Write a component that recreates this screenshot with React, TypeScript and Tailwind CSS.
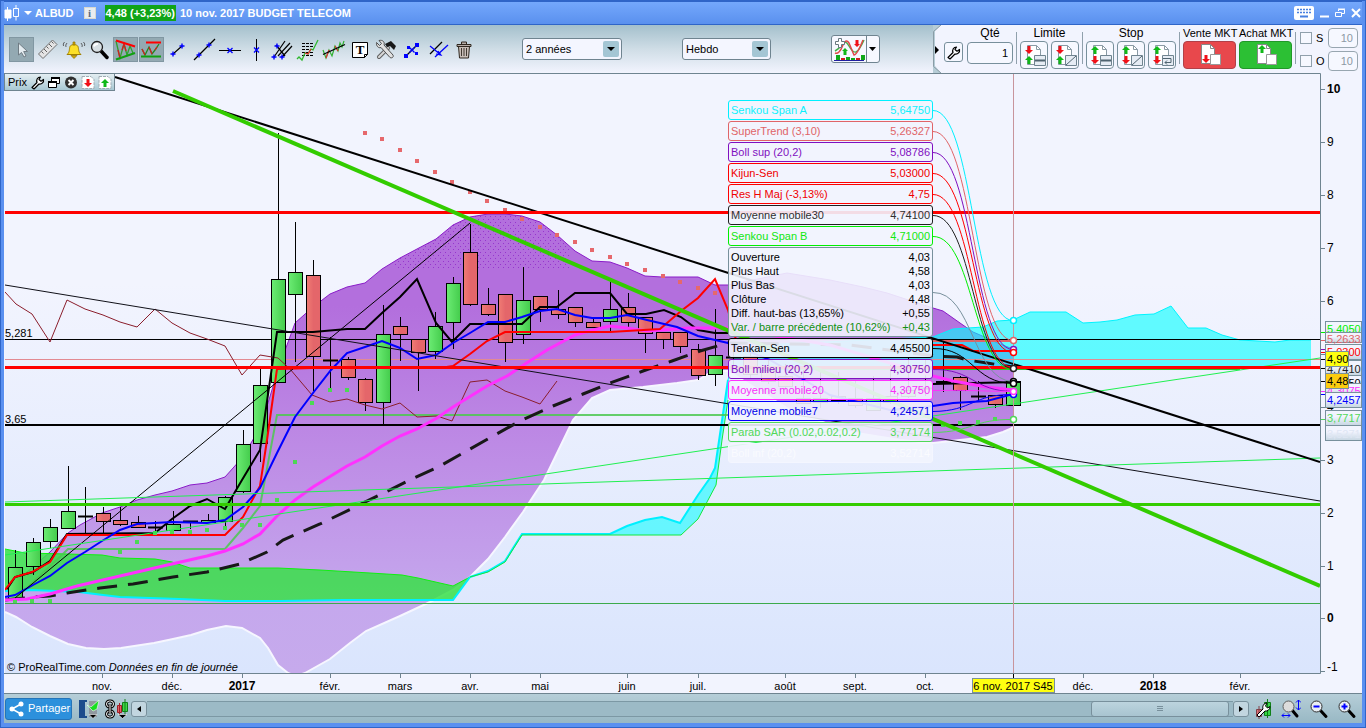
import { ReactNode } from "react";

type Candle = [number, number, number, number, number, "g" | "r" | "d"];

// index, high, low, body top, body bottom, kind
const candles: Candle[] = [
  [0, 550, 598, 567, 598, "g"],
  [1, 538, 575, 542, 566, "g"],
  [2, 519, 548, 527, 541, "g"],
  [3, 466, 528, 511, 528, "g"],
  [4, 487, 533, 516, 516, "d"],
  [5, 507, 533, 513, 521, "r"],
  [6, 507, 526, 520, 524, "r"],
  [7, 516, 527, 522, 527, "r"],
  [8, 521, 533, 527, 527, "d"],
  [9, 511, 532, 524, 530, "g"],
  [10, 521, 529, 521, 521, "d"],
  [11, 514, 522, 520, 522, "g"],
  [12, 496, 526, 497, 521, "g"],
  [13, 430, 493, 444, 491, "g"],
  [14, 369, 462, 385, 443, "g"],
  [15, 133, 382, 279, 382, "g"],
  [16, 222, 362, 272, 294, "g"],
  [17, 260, 391, 275, 356, "r"],
  [18, 337, 388, 360, 360, "d"],
  [19, 357, 380, 359, 377, "r"],
  [20, 378, 411, 379, 402, "r"],
  [21, 305, 424, 334, 402, "g"],
  [22, 317, 361, 326, 334, "r"],
  [23, 339, 391, 339, 352, "r"],
  [24, 312, 359, 326, 351, "g"],
  [25, 277, 349, 283, 322, "g"],
  [26, 224, 306, 252, 304, "r"],
  [27, 288, 316, 304, 314, "r"],
  [28, 294, 362, 294, 342, "r"],
  [29, 267, 344, 300, 334, "g"],
  [30, 296, 322, 296, 309, "r"],
  [31, 290, 319, 309, 314, "r"],
  [32, 307, 327, 307, 322, "r"],
  [33, 318, 327, 322, 327, "r"],
  [34, 282, 332, 309, 321, "g"],
  [35, 293, 327, 307, 322, "r"],
  [36, 317, 353, 317, 333, "r"],
  [37, 332, 349, 332, 339, "r"],
  [38, 332, 353, 332, 346, "r"],
  [39, 344, 380, 349, 375, "r"],
  [40, 309, 386, 355, 374, "g"],
  [41, 350, 366, 357, 357, "d"],
  [42, 352, 378, 356, 374, "r"],
  [43, 360, 384, 370, 381, "r"],
  [44, 364, 390, 376, 386, "r"],
  [45, 370, 404, 398, 403, "r"],
  [46, 368, 408, 398, 402, "g"],
  [47, 372, 404, 396, 400, "r"],
  [48, 380, 408, 398, 405, "r"],
  [49, 376, 410, 398, 410, "g"],
  [50, 362, 404, 396, 402, "r"],
  [51, 358, 398, 390, 396, "g"],
  [52, 360, 396, 388, 388, "d"],
  [53, 341, 392, 381, 382, "g"],
  [54, 376, 410, 377, 390, "r"],
  [55, 381, 401, 396, 396, "d"],
  [56, 395, 408, 395, 404, "r"],
  [57, 380, 405, 381, 405, "g"],
];

const bandUpper =
  "5,590 15,582 33,567 50,552 68,533 80,525 102,513 120,507 137,500 155,495 172,491 190,485 207,483 225,477 242,458 260,428 268,403 278,370 287,345 295,323 313,307 330,294 347,287 365,283 382,269 400,258 417,249 436,239 453,225 470,217 488,214 505,214 522,216 540,222 557,235 575,251 592,261 610,262 627,268 645,276 662,277 698,277 715,285 728,285 787,273 830,280 863,287 887,293 933,308 943,311 960,323 973,332 987,338 1000,344 1013,349";
const bandLower =
  "5,612 16,617 32,627 50,636 68,644 86,648 104,649 121,648 154,643 173,639 191,635 207,630 226,626 242,628 260,638 268,648 278,665 288,673 296,676 305,673 330,659 350,643 366,631 400,616 430,602 453,590 470,577 488,559 505,537 523,512 544,480 560,447 573,420 592,398 610,390 643,387 677,383 698,380 710,373 717,371 728,371 790,410 850,432 900,440 933,443 960,440 987,437 1003,432 1010,429 1013,427";
const bandFill = bandUpper + " " + bandLower.split(" ").reverse().join(" ");

const oldCloudTop =
  "5,549 25,553 67,554 102,555 120,558 155,559 172,562 190,568 278,568 320,570 370,573 402,575 418,578 453,586 470,577";
const oldCloudBottom =
  "5,591 32,590 79,592 103,595 120,597 179,599 225,601 280,601 343,600 453,600 470,577";
const oldCloudFill = oldCloudTop + " " + oldCloudBottom.split(" ").reverse().join(" ");

const spanAMid = "470,577 488,571 505,561 522,534 610,534 627,526 645,520 662,517 680,523 698,495 710,478 715,468 728,380";
const spanBMid = "470,577 488,572 505,562 522,535 681,535 698,519 716,485 722,440 728,400";
const cloudMidFill =
  "522,534 610,534 627,526 645,520 662,517 680,523 698,495 710,478 715,468 728,380 728,400 722,440 716,485 698,519 681,535 522,535";
const spanANew =
  "728,380 734,356 760,345 933,337 953,329 983,327 997,321 1013,320 1030,312 1066,312 1083,323 1100,322 1117,320 1135,315 1154,314 1171,306 1188,328 1206,328 1222,335 1240,340 1275,342 1290,340 1311,340";

const chikou =
  "5,292 16,304 32,314 50,342 67,300 85,309 103,315 120,322 137,327 155,309 172,323 190,333 207,339 225,346 242,375 260,355 278,358 290,369 312,395 330,402 347,399 365,405 382,409 400,403 417,417 437,416 452,421 470,382 487,380 505,391 522,397 540,404 557,381";
const tenkan =
  "7,589 15,577 33,572 50,561 67,534 155,533 172,519 190,506 207,499 225,509 242,480 260,450 277,332 313,332 347,329 365,329 382,313 400,297 417,279 436,323 452,342 470,324 522,324 540,307 557,307 575,293 610,293 627,314 646,314 664,310 681,317 698,330 715,333 728,333";
const kijun =
  "5,590 15,577 32,572 50,562 67,535 225,535 243,517 260,486 267,440 277,369 313,368 440,368 453,366 470,354 487,341 505,332 610,332 660,329 681,311 698,298 715,279 728,310 736,340";
const mm7 =
  "5,597 15,595 33,585 50,576 67,563 85,552 102,541 120,530 137,524 172,522 207,523 225,520 243,507 260,488 277,453 295,417 313,393 331,370 347,353 365,347 382,341 400,348 417,359 436,355 453,343 470,333 488,322 505,322 522,317 540,311 557,309 575,315 592,318 610,318 627,315 647,320 677,327 698,336 728,343 770,360 830,395 890,410 933,406 953,403 987,401 1013,394";
const mm20 =
  "5,600 27,599 50,594 77,586 120,576 163,566 207,556 225,551 243,544 260,534 277,516 295,500 313,487 347,466 365,457 382,446 400,436 417,429 437,418 453,407 487,386 507,376 522,366 547,350 575,335 593,330 610,326 627,328 647,331 662,330 688,328 728,328 830,345 933,376 953,381 987,387 1013,390";
const mm30 =
  "5,600 33,597 50,596 67,593 100,588 133,584 173,577 207,572 240,564 267,552 283,540 320,524 353,508 410,480 440,466 493,436 520,421 553,406 583,394 610,383 643,371 672,361 700,351 728,343 850,345 935,356 957,357 967,360 987,363 1013,367";

const sarRed = [
  [365, 133], [382, 139], [400, 150], [417, 161], [435, 172], [452, 182], [470, 192], [487, 201], [505, 210], [522, 219],
  [540, 227], [557, 235], [575, 242], [592, 250], [610, 257], [627, 264], [645, 270], [663, 276], [680, 282], [698, 288], [715, 293],
];
const sarGreen = [
  [15, 602], [32, 601], [50, 601], [120, 552], [137, 542], [155, 533], [172, 532], [190, 532], [207, 530], [225, 528],
  [242, 525], [260, 525], [277, 500], [295, 462], [312, 403], [330, 390], [347, 390], [943, 425], [960, 423], [978, 422], [995, 419],
];

const links: [number, number, string][] = [
  [110, 320, "#00f0ff"],
  [131, 340, "#e06468"],
  [152, 349, "#8010c0"],
  [173, 352, "#ff0000"],
  [194, 367, "#ff0000"],
  [215, 368, "#202020"],
  [236, 369, "#00f000"],
  [292, 381, "#78909c"],
  [348, 383, "#000000"],
  [369, 391, "#8010c0"],
  [390, 391, "#ff30ff"],
  [411, 394, "#0000ff"],
  [432, 419, "#50d858"],
];

const knobs: [number, string][] = [
  [320, "#00f0ff"],
  [340, "#e06468"],
  [349, "#8010c0"],
  [352, "#ff0000"],
  [368, "#202020"],
  [381, "#000000"],
  [383, "#000000"],
  [394, "#0000ff"],
  [391, "#ff30ff"],
  [419, "#50d858"],
];

const prices: [string, number][] = [
  ["10", 89], ["9", 142], ["8", 195], ["7", 248], ["6", 301], ["5", 354], ["4", 407], ["3", 460], ["2", 513], ["1", 566], ["0", 618], ["-1", 671],
];

const months: [string, number][] = [
  ["nov.", 102], ["déc.", 172], ["2017", 242], ["févr.", 330], ["mars", 400], ["avr.", 470], ["mai", 540], ["juin", 627],
  ["juil.", 698], ["août", 785], ["sept.", 855], ["oct.", 925], ["déc.", 1083], ["2018", 1153], ["févr.", 1240],
];

// value, top, height, baseline, colour
const tags: [string, number, number, number, string][] = [
  ["5,4050", 321, 15, 333, "#00f000"],
  ["5,2633", 332, 10, 343, "#e06468"],
  ["5,0300", 344, 15, 356, "#ff0000"],
  ["4,7410", 360, 15, 373, "#202020"],
  ["4,4550", 375, 15, 387, "#000000"],
  ["4,3075", 383, 11, 395, "#ff30ff"],
  ["4,2457", 392, 15, 404, "#0000ff"],
  ["3,7717", 410, 15, 422, "#50d858"],
  ["3,5271", 425, 15, 438, "#dfe6f4"],
];

const priceTicks: [number, string][] = [
  [332, "#00f000"], [340, "#e06468"], [349, "#8010c0"], [352, "#ff0000"], [359, "#000000"], [368, "#000000"],
  [381, "#000000"], [391, "#ff30ff"], [394, "#0000ff"], [419, "#50d858"],
];

const Chart = () => (
  <svg viewBox="4 73 1358 620" className="block w-full h-auto bg-[#f2f4fe] [font-family:'Liberation_Sans',Arial,sans-serif] text-[11px]">
    <defs>
      <linearGradient id="sky" x1="0" y1="73" x2="0" y2="673" gradientUnits="userSpaceOnUse">
        <stop offset="0.35" stopColor="#f2f4fe" />
        <stop offset="1" stopColor="#dae5fd" />
      </linearGradient>
      <linearGradient id="band" x1="0" y1="214" x2="0" y2="673" gradientUnits="userSpaceOnUse">
        <stop offset="0.2" stopColor="#b36fdd" />
        <stop offset="0.5" stopColor="#bd8ae5" />
        <stop offset="0.85" stopColor="#c5a8ed" />
        <stop offset="1" stopColor="#c6aaec" />
      </linearGradient>
      <linearGradient id="up">
        <stop offset="0" stopColor="#6cec74" />
        <stop offset="1" stopColor="#44cc4c" />
      </linearGradient>
      <linearGradient id="down">
        <stop offset="0" stopColor="#f07c74" />
        <stop offset="0.5" stopColor="#e4666a" />
      </linearGradient>
      <linearGradient id="tag" x1="0" y1="0" x2="0" y2="1">
        <stop offset="0.4" stopColor="#f2f4fe" />
        <stop offset="1" stopColor="#c6d6e2" />
      </linearGradient>
      <pattern id="dots" width="5" height="6" patternUnits="userSpaceOnUse">
        <rect x="0" y="0" width="1" height="1" fill="#8a1cc8" />
        <rect x="3" y="3" width="1" height="1" fill="#8a1cc8" />
      </pattern>
      <clipPath id="plot">
        <rect x="5" y="74" width="1315" height="599" />
      </clipPath>
      <clipPath id="bandTop">
        <rect x="395" y="210" width="175" height="58" />
      </clipPath>
    </defs>

    <rect x="5" y="74" width="1315" height="599" fill="url(#sky)" />

    <g clipPath="url(#plot)" fill="none">
      {/* Bollinger band */}
      <polygon points={bandFill} fill="url(#band)" />
      <polygon points={bandFill} fill="url(#dots)" fillOpacity="0.7" clipPath="url(#bandTop)" />
      <polyline points={bandUpper} stroke="#8a1cc8" />
      <polyline points={bandLower} stroke="#f6f6ff" strokeWidth="2" />

      {/* Ichimoku cloud */}
      <polygon points={oldCloudFill} fill="#38e048" fillOpacity="0.85" />
      <polyline points={oldCloudTop} stroke="#10f010" />
      <polyline points={oldCloudBottom} stroke="#00f0ff" strokeWidth="2" />
      <polygon points={cloudMidFill} fill="#00ffff" fillOpacity="0.55" />
      <polyline points={spanAMid} stroke="#00f0ff" strokeWidth="2" />
      <polyline points={spanBMid} stroke="#14e83c" strokeWidth="1" />
      <polygon points={spanANew + " 1311,369 728,369"} fill="#00ffff" fillOpacity="0.6" />
      <polyline points={spanANew} stroke="#00f4ff" />
      <path d="M728 369.5H1240" stroke="#28c828" />

      {/* SuperTrend */}
      <path d="M15 599L64 553L68 549H225L243 528L260 506L277 415H728" stroke="#4cc850" strokeWidth="2" strokeOpacity="0.85" />
      <path d="M933 340.5H1013" stroke="#e06468" strokeWidth="3" />

      {/* horizontal levels below the candles */}
      <path d="M5 359.5H1320" stroke="#e28a92" />
      <path d="M5 339.5H1320" stroke="#000" />
      <path d="M5 425H1320" stroke="#000" strokeWidth="2" />

      {candles.map(([i, high, low, top, bottom, kind]) => {
        const x = Math.round(15 + i * 17.5) + 0.5;
        return (
          <g key={i} stroke="#000">
            <path d={`M${x} ${high}V${low}`} />
            {kind === "d" ? (
              <path d={`M${x - 7.5} ${top + 0.5}h15`} strokeWidth="2" />
            ) : (
              <rect x={x - 7} y={top + 0.5} width="14" height={bottom - top} fill={kind === "g" ? "url(#up)" : "url(#down)"} />
            )}
          </g>
        );
      })}

      <polyline points={chikou} stroke="#8b1e2c" />
      <polyline points={mm30} stroke="#181818" strokeWidth="3" strokeDasharray="20 11" />
      <polyline points={tenkan} stroke="#000" strokeWidth="2" />
      <path d="M933 384L1020 382" stroke="#000" strokeWidth="2" />
      <polyline points={mm20} stroke="#ff30ff" strokeWidth="3" />
      <polyline points={kijun} stroke="#ff0000" strokeWidth="2" />
      <path d="M933 345H962L973 351H1013" stroke="#ff0000" strokeWidth="2" />
      <polyline points={mm7} stroke="#0000ff" strokeWidth="2" />

      {sarRed.map(([x, y]) => (
        <rect key={x} x={x - 2} y={y - 2} width="4" height="4" fill="#e6686c" />
      ))}
      {sarGreen.map(([x, y]) => (
        <rect key={x} x={x - 2} y={y - 2} width="4" height="4" fill="#4cd854" />
      ))}

      {/* hand drawn lines */}
      <path d="M5 285L1320 501" stroke="#101018" />
      <path d="M15 598L470 223" stroke="#000" />
      <path d="M5 502L1320 458" stroke="#20f050" />
      <path d="M5 555L1320 358" stroke="#20f050" />
      <path d="M115 77L1320 462" stroke="#000" strokeWidth="2" />
      <path d="M5 212.5H1320M5 367.5H1320" stroke="#ff0000" strokeWidth="3" />
      <path d="M5 504.5H1320" stroke="#33cc00" strokeWidth="3" />
      <path d="M5 603.5H1320" stroke="#3caa4a" />
      <path d="M173 91L1320 586" stroke="#33cc00" strokeWidth="4" />
      <path d="M1013.5 73V673" stroke="#c8949c" />

      {links.map(([from, to, color]) => (
        <path key={from} d={`M933 ${from + 0.5}C973 ${from} 973 ${to} 1013 ${to + 0.5}`} stroke={color} />
      ))}
      {knobs.map(([y, color]) => (
        <circle key={y} cx="1013.5" cy={y + 0.5} r="3" fill="#fff" stroke={color} strokeWidth="1.5" />
      ))}
    </g>

    <text x="5" y="337">5,281</text>
    <text x="5" y="423">3,65</text>
    <text x="7" y="671">
      © ProRealTime.com <tspan fontStyle="italic">Données en fin de journée</tspan>
    </text>

    {/* frame and price axis */}
    <path d="M4 73.5H1320.5V673.5H4" fill="none" stroke="#6f8490" />
    {prices.map(([label, y]) => (
      <g key={label}>
        <path d={`M1321 ${y + 0.5}h4`} stroke="#6f8490" />
        <text x="1327" y={label === "-1" ? 671 : y + 4} className={label === "10" || label === "0" ? "font-bold text-[12px]" : "text-[12px]"}>
          {label}
        </text>
      </g>
    ))}
    {priceTicks.map(([y, color]) => (
      <path key={y} d={`M1321 ${y + 0.5}h4`} stroke={color} />
    ))}
    {tags.map(([value, top, height, base, color]) => (
      <g key={value}>
        <rect x="1325.5" y={top + 0.5} width="36" height={height} fill="url(#tag)" stroke="#78909c" />
        <text x="1327" y={base} fill={color}>{value}</text>
      </g>
    ))}
    <rect x="1325.5" y="351.5" width="23" height="15" fill="#ffff10" stroke="#78909c" />
    <text x="1327" y="363">4,90</text>
    <rect x="1325.5" y="373.5" width="23" height="15" fill="#fccc10" stroke="#78909c" />
    <text x="1327" y="385">4,48</text>

    {/* time axis */}
    {months.map(([label, x]) => (
      <g key={x}>
        <path d={`M${x + 0.5} 674v4`} stroke="#6f8490" />
        <text x={x} y="690" textAnchor="middle" className={label.startsWith("20") ? "font-bold text-[12px]" : ""}>
          {label}
        </text>
      </g>
    ))}
    <path d="M1013.5 674v4" stroke="#000" />
    <rect x="972.5" y="678.5" width="82" height="14" fill="#ffff10" stroke="#78909c" />
    <text x="1013" y="690" textAnchor="middle">6 nov. 2017 S45</text>
  </svg>
);

const Reading = ({ name, value, className }: { name: string; value: string; className: string }) => (
  <div className={`flex h-5 items-center justify-between rounded-[3px] border bg-[#f2f4fe]/90 px-[2px] ${className}`}>
    <span>{name}</span>
    <span>{value}</span>
  </div>
);

const bar = [
  ["Ouverture", "4,03"],
  ["Plus Haut", "4,58"],
  ["Plus Bas", "4,03"],
  ["Clôture", "4,48"],
  ["Diff. haut-bas (13,65%)", "+0,55"],
];

const Readings = () => (
  <div className="absolute left-[724px] top-[27px] flex w-[205px] flex-col gap-px text-[11px] leading-[14px]">
    <Reading name="Senkou Span A" value="5,64750" className="border-[#00f0ff] text-[#10f0fc]" />
    <Reading name="SuperTrend (3,10)" value="5,26327" className="border-[#e06468] text-[#e06468]" />
    <Reading name="Boll sup (20,2)" value="5,08786" className="border-[#8010c0] text-[#8010c0]" />
    <Reading name="Kijun-Sen" value="5,03000" className="border-[#ff0000] text-[#f00000]" />
    <Reading name="Res H Maj (-3,13%)" value="4,75" className="border-[#ff0000] text-[#f00000]" />
    <Reading name="Moyenne mobile30" value="4,74100" className="border-[#202020] text-[#303030]" />
    <Reading name="Senkou Span B" value="4,71000" className="border-[#00f000] text-[#10e810]" />
    <div className="h-[90px] rounded-[3px] border border-[#78909c] bg-[#f2f4fe]/90 px-[2px] pt-[2px]">
      {bar.map(([name, value]) => (
        <div key={name} className="flex justify-between">
          <span>{name}</span>
          <span>{value}</span>
        </div>
      ))}
      <div className="flex justify-between text-[#109010]">
        <span>Var. / barre précédente (10,62%)</span>
        <span>+0,43</span>
      </div>
    </div>
    <Reading name="Tenkan-Sen" value="4,45500" className="border-black text-black" />
    <Reading name="Boll milieu (20,2)" value="4,30750" className="border-[#8010c0] text-[#8010c0]" />
    <Reading name="Moyenne mobile20" value="4,30750" className="border-[#ff30ff] text-[#f830f8]" />
    <Reading name="Moyenne mobile7" value="4,24571" className="border-[#0000ff] text-[#0000e8]" />
    <Reading name="Parab SAR (0.02,0.02,0.2)" value="3,77174" className="border-[#50d858] text-[#50d858]" />
    <Reading name="Boll inf (20,2)" value="3,52714" className="border-[#f4f6ff] text-[#fafbff]" />
  </div>
);

const Icon = ({ children, w = 25, h = 25 }: { children: ReactNode; w?: number; h?: number }) => (
  <svg width={w} height={h} viewBox={`0 0 ${w} ${h}`} fill="none" className="block shrink-0">
    {children}
  </svg>
);

const Cross = ({ x, y }: { x: number; y: number }) => (
  <path d={`M${x - 2.5} ${y}h5M${x} ${y - 2.5}v5`} stroke="#0000ff" strokeWidth="1.4" />
);
const Ex = ({ x, y }: { x: number; y: number }) => (
  <path d={`M${x - 2.5} ${y - 2.5}l5 5M${x + 2.5} ${y - 2.5}l-5 5`} stroke="#0000ff" strokeWidth="1.3" />
);

const Wrench = () => (
  <path
    d="M2 12.5L7 7.5C6 5 7.5 2 10.5 2L9 4.5L11 6.2L13.5 4.5C14 7 12 9.5 9 9L4 14Z"
    fill="#fff"
    stroke="#000"
    strokeWidth="1.2"
    strokeLinejoin="round"
  />
);

const tools: { name: string; on?: boolean; icon: ReactNode }[] = [
  {
    name: "Pointeur",
    on: true,
    icon: <path d="M9.500 6v12l3-2.500 2.500 4.500 2-1-2.300-4.500h3.800z" fill="#e4ecf0" stroke="#707c84" />,
  },
  {
    name: "Règle",
    icon: (
      <>
        <path d="M3.500 17L17.500 3L22 7.500L8 21.500Z" fill="#e4e4e4" stroke="#707070" />
        <path d="M6.500 14.500l2 2M9 12l3 3M11.500 9.500l2 2M14 7l3 3M16.500 4.500l2 2" stroke="#606060" />
      </>
    ),
  },
  {
    name: "Alarme",
    icon: (
      <>
        <path d="M6 17.500C9 15 8 12 9 9.500C10 7 16 7 17 9.500C18 12 17 15 20 17.500Z" fill="#fce028" stroke="#a08000" />
        <path d="M10 18.500h6l-3 3zM12 5h2v3h-2z" fill="#d0a800" stroke="#907000" strokeWidth="0.7" />
        <path d="M6 6q-2 2-1 4M3.500 5q-2 2-1 4M20 6q2 2 1 4M22.500 5q2 2 1 4" stroke="#404040" strokeWidth="0.8" />
      </>
    ),
  },
  {
    name: "Loupe",
    icon: (
      <>
        <path d="M14.500 14.500L20 20.500" stroke="#000" strokeWidth="3.500" strokeLinecap="round" />
        <circle cx="10" cy="10" r="5.500" fill="#d8e0e4" stroke="#202020" strokeWidth="1.300" />
        <path d="M7 9.500q1-3 4-2.500" stroke="#fff" strokeWidth="2" />
      </>
    ),
  },
  {
    name: "Figures",
    on: true,
    icon: (
      <>
        <path d="M3 4l4 17 4-14 3 11 3-9 3 7" stroke="#30a030" strokeWidth="1.300" />
        <path d="M5 13l2 8M9 13l2-6 2 7" stroke="#d02020" strokeWidth="1.300" />
        <path d="M3 3.500L22 9.500" stroke="#ff0000" strokeWidth="2" />
        <path d="M3 22.500L22 16" stroke="#10a010" strokeWidth="2" />
      </>
    ),
  },
  {
    name: "Supports et résistances",
    on: true,
    icon: (
      <>
        <path d="M3 12l3 6 4-8 3 7 3-4 4-6" stroke="#208820" strokeWidth="1.300" />
        <path d="M3 12l3 6M10 10l3 7M16 13l2-3" stroke="#d02020" strokeWidth="1.300" />
        <path d="M7 5.500h15" stroke="#ff0000" strokeWidth="2" />
        <path d="M2 19.500h20" stroke="#10a010" strokeWidth="2" />
      </>
    ),
  },
  {
    name: "Segment",
    icon: (
      <>
        <path d="M8 17l9-8" stroke="#000" strokeWidth="1.200" />
        <Cross x={8} y={17} />
        <Cross x={17} y={9} />
      </>
    ),
  },
  {
    name: "Droite",
    icon: (
      <>
        <path d="M3 23L24 2" stroke="#000" strokeWidth="1.200" />
        <Cross x={8} y={18} />
        <Cross x={18} y={8} />
      </>
    ),
  },
  {
    name: "Ligne horizontale",
    icon: (
      <>
        <path d="M2 13.500h22" stroke="#000" />
        <Ex x={13} y={13.5} />
      </>
    ),
  },
  {
    name: "Ligne verticale",
    icon: (
      <>
        <path d="M13.500 2v22" stroke="#000" />
        <Ex x={13.5} y={13} />
      </>
    ),
  },
  {
    name: "Fourchette",
    icon: (
      <>
        <path d="M5 20L16 4M9 19L21 6M13 20L23 9M7 8l9 11" stroke="#000" strokeWidth="1.200" />
        <Cross x={5} y={20} />
        <Cross x={8} y={9} />
        <Cross x={13} y={20} />
      </>
    ),
  },
  {
    name: "Fibonacci",
    icon: (
      <>
        <path d="M7 6.500h12M7 9.500h12M7 12.500h12M7 15.500h12M7 18.500h12" stroke="#000" strokeDasharray="3 1" />
        <path d="M2 22l2-2 3 3 3-7 3 1 3-5 2 1 5-10" stroke="#30b830" strokeWidth="1.300" />
        <path d="M10 16l3 1 3-5" stroke="#e03030" strokeWidth="1.300" />
      </>
    ),
  },
  {
    name: "Régression",
    icon: (
      <>
        <path d="M2 13l3 8 3-8 3 6 3-10 3 5 2-8 2 4 2-6" stroke="#30b030" strokeWidth="1.200" />
        <path d="M5 21l3-8M14 9l3 5" stroke="#e03030" strokeWidth="1.200" />
        <path d="M2 17.500L24 7.500" stroke="#000" strokeWidth="1.300" />
      </>
    ),
  },
  {
    name: "Texte",
    icon: (
      <>
        <path d="M5.500 5.500h15v12l-3 3h-12z" fill="#fff" stroke="#000" />
        <path d="M17.500 20.500v-3h3" stroke="#000" />
        <text x="13" y="17" textAnchor="middle" fontFamily="Liberation Serif" fontWeight="bold" fontSize="13" fill="#000">T</text>
      </>
    ),
  },
  {
    name: "Outils",
    icon: (
      <>
        <path d="M6 20L15 11" stroke="#606060" strokeWidth="4" strokeLinecap="round" />
        <path d="M6 20L15 11" stroke="#d8d8d8" strokeWidth="2" strokeLinecap="round" />
        <path d="M3.500 5.500l3 3 2-2-2.500-3c4-1 6 2 5 4.500l9 10c1 2-1 3.500-3 2.500l-9-10C5.500 11.500 3 9 3.500 5.500z" fill="#e0e0e0" stroke="#505050" />
        <path d="M12 7l6-3 5 5-2 4-4-4-3 1z" fill="#181818" />
      </>
    ),
  },
  {
    name: "Déplacer",
    icon: (
      <>
        <path d="M7 19L19 7" stroke="#000" strokeWidth="1.200" />
        <Ex x={13} y={13} />
        <path d="M5 17h4v4H5zM16 6h4v4h-4zM8 9h3v3H8zM16 15h3v3h-3z" fill="#0000ff" />
      </>
    ),
  },
  {
    name: "Parallèle",
    icon: (
      <>
        <path d="M5 17L17 5" stroke="#000" strokeWidth="1.300" />
        <path d="M10 20L23 8" stroke="#0000ff" strokeWidth="1.300" />
        <path d="M5 9l11 9M13 14l3 4-5-1" stroke="#0000ff" strokeWidth="1.200" />
      </>
    ),
  },
  {
    name: "Supprimer",
    icon: (
      <>
        <path d="M7.500 9.500h11l-1 11.500h-9z" fill="#c8beb8" stroke="#302820" />
        <path d="M10.500 11v8M13 11v8M15.500 11v8" stroke="#403830" />
        <path d="M6 7.500h14v2H6zM10.500 7v-2h5v2" fill="#b8aea8" stroke="#302820" />
      </>
    ),
  },
];

const Dropdown = ({ label, className, options }: { label: string; className: string; options: string[] }) => (
  <div className={`relative ${className}`}>
    <select aria-label={label} className="block h-[22px] w-full appearance-none rounded-[3px] border border-[#6f8490] bg-[#f4f6ff] pl-[3px] text-[11px] leading-5 text-black">
      {options.map((o) => (
        <option key={o}>{o}</option>
      ))}
    </select>
    <span className="pointer-events-none absolute right-[3px] top-[3px] flex h-4 w-4 items-center justify-center rounded-[2px] bg-[#a4c6d4]">
      <Icon w={8} h={4}>
        <path d="M0 0h8L4 4z" fill="#000" />
      </Icon>
    </span>
  </div>
);

const Up = ({ x, y }: { x: number; y: number }) => (
  <path d={`M${x} ${y}l4 4h-2.500v4h-3v-4H${x - 4}z`} fill="#10b818" />
);
const Down = ({ x, y }: { x: number; y: number }) => (
  <path d={`M${x} ${y}l4-4h-2.500v-4h-3v4H${x - 4}z`} fill="#f01018" />
);

const OrderButton = ({ name, kind, upFirst }: { name: string; kind: "limit" | "slash" | "trail"; upFirst?: boolean }) => (
  <button aria-label={name} className="flex h-7 w-7 items-center justify-center rounded-[4px] border border-[#78909c] bg-[#f6f8ff]">
    <Icon w={24} h={24}>
      <path d="M5.500 2.500h9l4 4v15h-13z" fill="#fff" stroke="#8a9aa4" />
      <path d="M14.500 2.500v4h4" stroke="#8a9aa4" />
      {upFirst ? <Up x={7} y={3} /> : <Down x={7} y={11} />}
      {upFirst ? <Down x={7} y={21} /> : <Up x={7} y={13} />}
      <path d="M12.500 12.500h11v10h-11z" fill="#e6ecf4" stroke="#708490" />
      {kind === "limit" && <path d="M13 17.500h10" stroke="#506470" strokeWidth="2" />}
      {kind === "slash" && <path d="M13 22L23 13" stroke="#506470" />}
      {kind === "trail" && <path d="M13 15.500h8v4h-6l2-2M15 19.500l2 2" stroke="#506470" />}
    </Icon>
  </button>
);

const Separator = () => <div className="mx-[3px] mt-[7px] h-8 w-px bg-[#90a0ac]" />;

const Orders = () => (
  <div className="flex h-full bg-[#f2f4fe] pr-1 text-[12px] leading-4">
    <Icon w={11} h={48}>
      <path d="M0 0H8L2 6V41L8 48H0Z" fill="#b6ccd6" />
      <path d="M8 0L.5 6.500V41.500L8 48" stroke="#8a9ca6" />
      <path d="M2 21l4 4-4 4z" fill="#000" />
    </Icon>
    <button aria-label="Options" className="mt-[17px] flex h-5 w-[19px] items-center justify-center rounded-[3px] border border-[#78909c] bg-[#f6f8ff]">
      <Icon w={15} h={15}>
        <Wrench />
      </Icon>
    </button>
    <div className="ml-1 flex w-[46px] flex-col">
      <label htmlFor="qty" className="text-center">Qté</label>
      <input id="qty" defaultValue="1" className="mt-px h-[22px] w-full rounded-[4px] border border-[#78909c] bg-[#f6f8ff] pr-1 text-right text-[11px]" />
    </div>
    <Separator />
    <div className="text-center">
      <span>Limite</span>
      <div className="flex gap-[3px]">
        <OrderButton name="Limite" kind="limit" />
        <OrderButton name="Limite oblique" kind="slash" />
      </div>
    </div>
    <Separator />
    <div className="text-center">
      <span>Stop</span>
      <div className="flex gap-[3px]">
        <OrderButton name="Stop" kind="limit" upFirst />
        <OrderButton name="Stop oblique" kind="slash" upFirst />
        <OrderButton name="Stop suiveur" kind="trail" upFirst />
      </div>
    </div>
    <Separator />
    <div className="flex gap-[3px] whitespace-nowrap text-[11px]">
      <div className="w-[53px]">
        <span>Vente MKT</span>
        <button aria-label="Vente MKT" className="flex h-7 w-full items-center justify-center rounded-[4px] border border-[#b04048] bg-[#e8484c]">
          <Icon w={24} h={24}>
            <path d="M3.500 1.500h9l4 4v15h-13z" fill="#fff" stroke="#888" />
            <path d="M12.500 1.500v4h4" stroke="#888" />
            <path d="M12.500 11.500h10v10h-10z" fill="#fff" stroke="#999" />
            <Down x={8} y={20} />
          </Icon>
        </button>
      </div>
      <div className="w-[53px]">
        <span>Achat MKT</span>
        <button aria-label="Achat MKT" className="flex h-7 w-full items-center justify-center rounded-[4px] border border-[#209828] bg-[#2cc034]">
          <Icon w={24} h={24}>
            <path d="M3.500 1.500h9l4 4v15h-13z" fill="#fff" stroke="#888" />
            <path d="M12.500 1.500v4h4" stroke="#888" />
            <path d="M12.500 11.500h10v10h-10z" fill="#fff" stroke="#999" />
            <Up x={8} y={2} />
          </Icon>
        </button>
      </div>
    </div>
    <Separator />
    <div className="flex flex-col gap-[3px] pt-[3px] text-[11px]">
      {["S", "O"].map((side) => (
        <div key={side} className="flex items-center">
          <input type="checkbox" id={side} className="ml-px h-3 w-3 appearance-none border border-[#90a0ac] bg-[#f6f8ff]" />
          <label htmlFor={side} className="ml-1 w-3">{side}</label>
          <input aria-label={`Distance ${side}`} defaultValue="10" className="h-5 w-[30px] rounded-[4px] border border-[#98a6b0] bg-[#f6f8ff] pr-1 text-right text-[#8c98a4]" />
        </div>
      ))}
    </div>
  </div>
);

const TitleBar = () => (
  <header className="flex h-[25px] items-center border-b border-t-2 border-b-[#2f65c8] border-t-[#2f65c8] bg-linear-to-b from-[#74a8fc] to-[#5a90ee] text-[11px] font-bold text-white">
    <Icon w={17} h={18}>
      <path d="M1 6h6v8H1zM3.500 3v14" fill="#fff" stroke="#fff" strokeWidth="1" />
      <path d="M9.500 4.500h5v8h-5zM12 1v3.500M12 12.500v4" stroke="#fff" />
    </Icon>
    <button aria-label="Choisir une valeur" className="ml-[3px]">
      <Icon w={8} h={4}>
        <path d="M0 0h8L4 4z" fill="#fff" />
      </Icon>
    </button>
    <h1 className="ml-[3px]">ALBUD</h1>
    <button aria-label="Informations" className="ml-[10px] flex h-3 w-3 items-center justify-center border border-[#d8d8d0] bg-[#e8ecf0] [font-family:'Liberation_Serif',serif] text-[#5c6c80]">
      i
    </button>
    <span className="ml-[9px] h-4 bg-[#10a418] px-px leading-4">4,48 (+3,23%)</span>
    <span className="ml-1">10 nov. 2017 BUDGET TELECOM</span>
    <div className="ml-auto flex items-center gap-[6px] pr-px">
      <button aria-label="Clavier">
        <Icon w={20} h={14}>
          <rect width="20" height="14" rx="2" fill="#fff" />
          <path d="M3 3.500h14M3 6.500h14" stroke="#4880e0" strokeWidth="1.500" strokeDasharray="2 1" />
          <path d="M6 10.500h8" stroke="#4880e0" strokeWidth="2" />
        </Icon>
      </button>
      <button aria-label="Réduire">
        <Icon w={9} h={10}>
          <path d="M0 8.500h9" stroke="#fff" strokeWidth="2" />
        </Icon>
      </button>
      <button aria-label="Restaurer">
        <Icon w={10} h={10}>
          <path d="M3.500 3V1.500h6v4H7M.5 4.500h6v4h-6zM3 1h7" stroke="#fff" />
        </Icon>
      </button>
      <button aria-label="Fermer">
        <Icon w={10} h={10}>
          <path d="M1 1l8 8M9 1L1 9" stroke="#fff" strokeWidth="2" />
        </Icon>
      </button>
    </div>
  </header>
);

const Toolbar = () => (
  <div className="flex h-12 bg-linear-to-b from-[#a4c0cc] via-[#cfdde6] to-[#f2f4fe]">
    <div className="flex flex-1 items-center">
      <div className="ml-[5px] flex gap-px">
        {tools.map((t) => (
          <button
            key={t.name}
            aria-label={t.name}
            className={t.on ? "h-[25px] w-[25px] bg-[#93a9b2] shadow-[inset_0_0_0_1px_#8197a2]" : "h-[25px] w-[25px]"}
          >
            <Icon>{t.icon}</Icon>
          </button>
        ))}
      </div>
      <Dropdown label="Période" className="ml-[46px] w-[100px]" options={["2 années", "1 an", "6 mois"]} />
      <Dropdown label="Unité de temps" className="ml-[60px] w-[89px]" options={["Hebdo", "Journalier", "Mensuel"]} />
      <div className="ml-[60px] flex h-7 rounded-[3px] border border-[#6f8490] bg-[#f6f8ff]">
        <button aria-label="Ajouter un indicateur" className="border-r border-[#6f8490] px-px">
          <Icon w={32} h={26}>
            <path d="M2 15q4-2 7-7 3-5 7 2t7 6 8-12" stroke="#40b048" strokeWidth="1.500" />
            <path d="M2 17q4 2 8-8 3-7 6-2l5 12q3 0 9-15" stroke="#e04848" strokeWidth="1.500" />
            <path d="M5.500 2.500h3v3h3v3h-3v3h-3v-3h-3v-3h3z" fill="#fff" stroke="#687880" />
            <path d="M12 12l3 3h-1.500v4h-3v-4H9z" fill="#10b818" />
            <path d="M24 11l-3-3h1.500V4h3v4H27z" fill="#f01018" />
            <path d="M3 19h4v5H3zM13 21h4v3h-4zM18 22h4v2h-4zM28 19h4v5h-4z" fill="#10a818" />
            <path d="M8 22h4v2H8zM23 22h4v2h-4z" fill="#d02020" />
            <path d="M1 24.500h30" stroke="#2020a0" />
          </Icon>
        </button>
        <button aria-label="Liste des indicateurs" className="px-[2px]">
          <Icon w={8} h={4}>
            <path d="M0 0h7L3.500 4z" fill="#000" />
          </Icon>
        </button>
      </div>
    </div>
    <Orders />
  </div>
);

const PriceHead = () => (
  <div className="absolute left-0 top-0 flex h-[18px] w-[111px] items-center border border-[#6f8490] bg-linear-to-b from-[#e4eef2] to-[#a8c8d4] pl-[3px] text-[11px]">
    <span className="w-[22px]">Prix</span>
    <button aria-label="Réglages du prix">
      <Icon w={16} h={15}>
        <Wrench />
      </Icon>
    </button>
    <button aria-label="Détacher">
      <Icon w={17} h={15}>
        <path d="M5.500 2.500h8v6h-8z" fill="#fff" stroke="#000" />
        <path d="M5 3h9" stroke="#000" strokeWidth="2" />
        <path d="M2.500 6.500h8v6h-8z" fill="#fff" stroke="#000" />
        <path d="M2 7h9" stroke="#000" strokeWidth="2" />
      </Icon>
    </button>
    <button aria-label="Fermer le prix">
      <Icon w={17} h={15}>
        <circle cx="8" cy="7.500" r="6" fill="#303030" />
        <path d="M5.500 5l5 5M10.500 5l-5 5" stroke="#fff" strokeWidth="2" />
      </Icon>
    </button>
    <button aria-label="Descendre">
      <Icon w={17} h={15}>
        <path d="M2 1.500h9l3 3v9H2z" fill="#fff" stroke="#a0acb4" strokeDasharray="3 1" />
        <Down x={8} y={12} />
      </Icon>
    </button>
    <button aria-label="Monter">
      <Icon w={16} h={15}>
        <path d="M2 1.500h9l3 3v9H2z" fill="#fff" stroke="#a0acb4" strokeDasharray="3 1" />
        <Up x={8} y={4} />
      </Icon>
    </button>
  </div>
);

const Lens = ({ children }: { children?: ReactNode }) => (
  <Icon w={20} h={20}>
    <path d="M11.500 11.500L17 17.500" stroke="#000" strokeWidth="3" strokeLinecap="round" />
    <circle cx="7.500" cy="7.500" r="5.500" fill="#e8eef4" stroke="#303030" />
    {children}
  </Icon>
);

const Footer = () => (
  <footer className="flex h-[30px] items-center border-t border-[#6f8490] bg-linear-to-b from-[#b6ced8] to-[#98b8c4] text-[12px]">
    <button className="ml-px flex h-[22px] w-[67px] items-center gap-1 rounded-[3px] border border-[#2474b8] bg-[#2c90dc] pl-[3px] text-[11px] text-white">
      <Icon w={15} h={16}>
        <path d="M12 3L3 8L12 13" stroke="#fff" strokeWidth="1.500" />
        <circle cx="12" cy="3" r="2.500" fill="#fff" />
        <circle cx="3" cy="8" r="2.500" fill="#fff" />
        <circle cx="12" cy="13" r="2.500" fill="#fff" />
      </Icon>
      Partager
    </button>
    <button aria-label="Valider" className="ml-[6px]">
      <Icon w={22} h={20}>
        <path d="M1 1h8v2H7v14h2v2H1z" fill="#1c4c8c" />
        <path d="M11 2h8v16h-8z" fill="#90989f" />
        <path d="M9 6l4 2 8-7-2 9-4 2z" fill="#18e020" stroke="#fff" strokeWidth="0.600" />
        <path d="M11 15.500h8l-4 4z" fill="#000" stroke="#fff" strokeWidth="0.600" />
      </Icon>
    </button>
    <button aria-label="Lier" className="ml-1">
      <Icon w={25} h={20}>
        <rect x="2.500" y="2" width="7" height="6" rx="3" stroke="#000" strokeWidth="3" />
        <rect x="2.500" y="12" width="7" height="6" rx="3" stroke="#000" strokeWidth="3" />
        <rect x="2.500" y="2" width="7" height="6" rx="3" stroke="#fff" />
        <rect x="2.500" y="12" width="7" height="6" rx="3" stroke="#fff" />
        <path d="M6 5v10" stroke="#000" strokeWidth="3" />
        <path d="M6 5v10" stroke="#fff" />
        <path d="M13.500 6.500h4v7h-4zM15.500 4v12" fill="#e86068" stroke="#a02028" />
        <path d="M18.500 3.500h5v9h-5zM21 0v16" fill="#40d848" stroke="#108018" />
        <path d="M14 15.500h9l-4.500 4z" fill="#000" stroke="#fff" strokeWidth="0.600" />
      </Icon>
    </button>
    <button aria-label="Reculer" className="ml-[2px] flex h-4 w-4 items-center justify-center rounded-[3px] border border-[#78909c] bg-[#c2d6e0]">
      <Icon w={4} h={6}>
        <path d="M4 0v6L0 3z" fill="#000" />
      </Icon>
    </button>
    <div className="flex h-4 flex-1 justify-end border-y border-[#7c98a4] bg-[#9cbac6] pr-1">
      <div className="-my-px flex w-[138px] items-center justify-center rounded-[3px] border border-[#78909c] bg-linear-to-b from-[#bcd4de] to-[#a8c4d0]">
        <Icon w={6} h={6}>
          <path d="M0 .5h6M0 2.500h6M0 4.500h6" stroke="#78909c" />
        </Icon>
      </div>
    </div>
    <button aria-label="Avancer" className="flex h-4 w-4 items-center justify-center rounded-[3px] border border-[#78909c] bg-[#c2d6e0]">
      <Icon w={4} h={6}>
        <path d="M0 0v6L4 3z" fill="#000" />
      </Icon>
    </button>
    <div className="ml-[6px] flex items-center gap-2 pr-[5px]">
      <button aria-label="Réglages du graphique">
        <Icon w={18} h={20}>
          <path d="M1.500 10.500h5v7h-5zM4 7v13" fill="#e07078" stroke="#804048" />
          <path d="M9.500 3.500h6v13h-6zM12.500 0v19" fill="#38d848" stroke="#108018" />
          <path d="M2 16L8 10C7 7 9 4 12 4L10.500 7L12.500 9L15 7.500C15 11 12 12.500 10 12L4 18Z" fill="#fff" stroke="#000" />
        </Icon>
      </button>
      <button aria-label="Zoom automatique">
        <Icon w={20} h={20}>
          <path d="M11 11l5 6" stroke="#000" strokeWidth="3" strokeLinecap="round" />
          <circle cx="7.500" cy="7.500" r="5.500" fill="#dcdcdc" stroke="#606060" />
          <path d="M17.500 1v10M15 3.500L17.500 1L20 3.500M15 8.500l2.500 2.500L20 8.500M1 16.500h8M3 14.500l-2 2 2 2M7 14.500l2 2-2 2" stroke="#0000ff" />
        </Icon>
      </button>
      <button aria-label="Zoom arrière">
        <Lens>
          <path d="M4.500 7.500h6" stroke="#0000ff" strokeWidth="2" />
        </Lens>
      </button>
      <button aria-label="Zoom avant">
        <Lens>
          <path d="M4.500 7.500h6M7.500 4.500v6" stroke="#0000ff" strokeWidth="2" />
        </Lens>
      </button>
    </div>
  </footer>
);

export default function App() {
  return (
    <div className="flex min-h-screen flex-col border-x-4 border-b-[5px] border-[#5a90f0] bg-[#f2f4fe] [font-family:'Liberation_Sans',Arial,sans-serif] text-black outline-1 -outline-offset-1 outline-[#2f65c8]">
      <TitleBar />
      <Toolbar />
      <main className="relative flex-1">
        <Chart />
        <PriceHead />
        <Readings />
      </main>
      <Footer />
    </div>
  );
}
